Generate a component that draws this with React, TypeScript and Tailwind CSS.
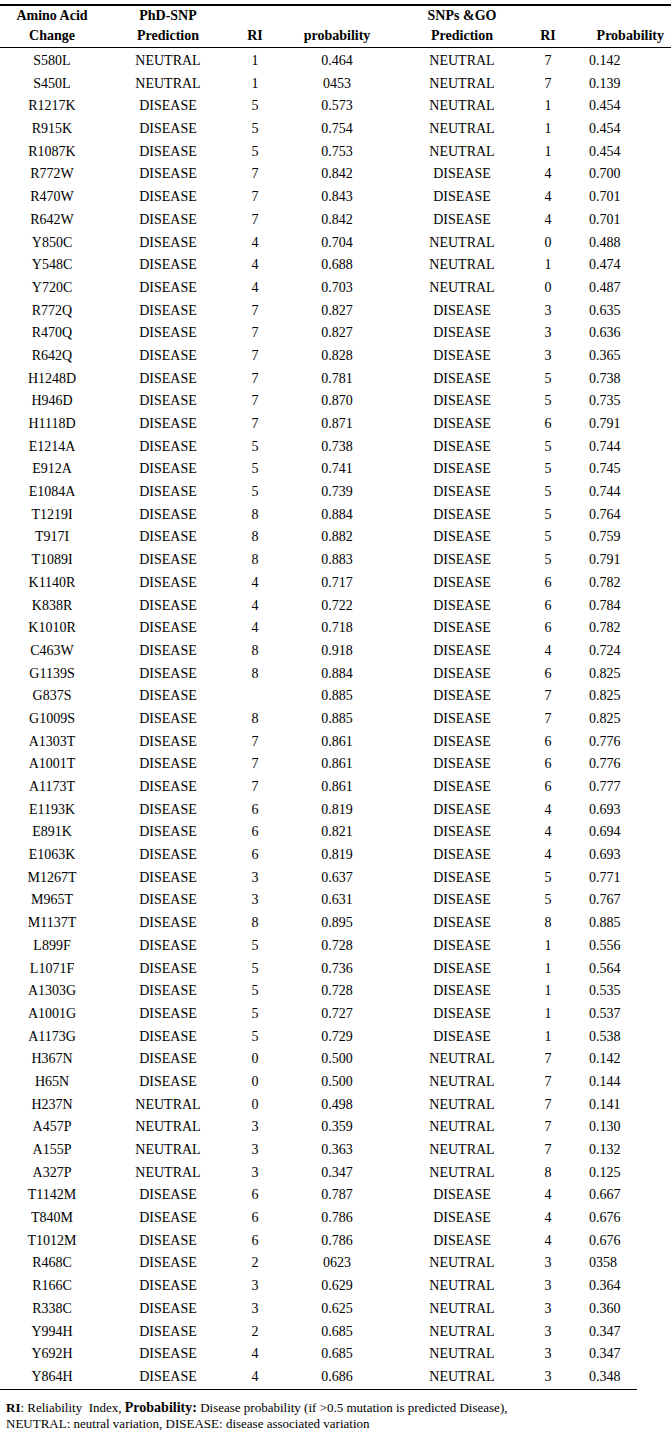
const rows: string[][] = [
  ['S580L', 'NEUTRAL', '1', '0.464', 'NEUTRAL', '7', '0.142'],
  ['S450L', 'NEUTRAL', '1', '0453', 'NEUTRAL', '7', '0.139'],
  ['R1217K', 'DISEASE', '5', '0.573', 'NEUTRAL', '1', '0.454'],
  ['R915K', 'DISEASE', '5', '0.754', 'NEUTRAL', '1', '0.454'],
  ['R1087K', 'DISEASE', '5', '0.753', 'NEUTRAL', '1', '0.454'],
  ['R772W', 'DISEASE', '7', '0.842', 'DISEASE', '4', '0.700'],
  ['R470W', 'DISEASE', '7', '0.843', 'DISEASE', '4', '0.701'],
  ['R642W', 'DISEASE', '7', '0.842', 'DISEASE', '4', '0.701'],
  ['Y850C', 'DISEASE', '4', '0.704', 'NEUTRAL', '0', '0.488'],
  ['Y548C', 'DISEASE', '4', '0.688', 'NEUTRAL', '1', '0.474'],
  ['Y720C', 'DISEASE', '4', '0.703', 'NEUTRAL', '0', '0.487'],
  ['R772Q', 'DISEASE', '7', '0.827', 'DISEASE', '3', '0.635'],
  ['R470Q', 'DISEASE', '7', '0.827', 'DISEASE', '3', '0.636'],
  ['R642Q', 'DISEASE', '7', '0.828', 'DISEASE', '3', '0.365'],
  ['H1248D', 'DISEASE', '7', '0.781', 'DISEASE', '5', '0.738'],
  ['H946D', 'DISEASE', '7', '0.870', 'DISEASE', '5', '0.735'],
  ['H1118D', 'DISEASE', '7', '0.871', 'DISEASE', '6', '0.791'],
  ['E1214A', 'DISEASE', '5', '0.738', 'DISEASE', '5', '0.744'],
  ['E912A', 'DISEASE', '5', '0.741', 'DISEASE', '5', '0.745'],
  ['E1084A', 'DISEASE', '5', '0.739', 'DISEASE', '5', '0.744'],
  ['T1219I', 'DISEASE', '8', '0.884', 'DISEASE', '5', '0.764'],
  ['T917I', 'DISEASE', '8', '0.882', 'DISEASE', '5', '0.759'],
  ['T1089I', 'DISEASE', '8', '0.883', 'DISEASE', '5', '0.791'],
  ['K1140R', 'DISEASE', '4', '0.717', 'DISEASE', '6', '0.782'],
  ['K838R', 'DISEASE', '4', '0.722', 'DISEASE', '6', '0.784'],
  ['K1010R', 'DISEASE', '4', '0.718', 'DISEASE', '6', '0.782'],
  ['C463W', 'DISEASE', '8', '0.918', 'DISEASE', '4', '0.724'],
  ['G1139S', 'DISEASE', '8', '0.884', 'DISEASE', '6', '0.825'],
  ['G837S', 'DISEASE', '', '0.885', 'DISEASE', '7', '0.825'],
  ['G1009S', 'DISEASE', '8', '0.885', 'DISEASE', '7', '0.825'],
  ['A1303T', 'DISEASE', '7', '0.861', 'DISEASE', '6', '0.776'],
  ['A1001T', 'DISEASE', '7', '0.861', 'DISEASE', '6', '0.776'],
  ['A1173T', 'DISEASE', '7', '0.861', 'DISEASE', '6', '0.777'],
  ['E1193K', 'DISEASE', '6', '0.819', 'DISEASE', '4', '0.693'],
  ['E891K', 'DISEASE', '6', '0.821', 'DISEASE', '4', '0.694'],
  ['E1063K', 'DISEASE', '6', '0.819', 'DISEASE', '4', '0.693'],
  ['M1267T', 'DISEASE', '3', '0.637', 'DISEASE', '5', '0.771'],
  ['M965T', 'DISEASE', '3', '0.631', 'DISEASE', '5', '0.767'],
  ['M1137T', 'DISEASE', '8', '0.895', 'DISEASE', '8', '0.885'],
  ['L899F', 'DISEASE', '5', '0.728', 'DISEASE', '1', '0.556'],
  ['L1071F', 'DISEASE', '5', '0.736', 'DISEASE', '1', '0.564'],
  ['A1303G', 'DISEASE', '5', '0.728', 'DISEASE', '1', '0.535'],
  ['A1001G', 'DISEASE', '5', '0.727', 'DISEASE', '1', '0.537'],
  ['A1173G', 'DISEASE', '5', '0.729', 'DISEASE', '1', '0.538'],
  ['H367N', 'DISEASE', '0', '0.500', 'NEUTRAL', '7', '0.142'],
  ['H65N', 'DISEASE', '0', '0.500', 'NEUTRAL', '7', '0.144'],
  ['H237N', 'NEUTRAL', '0', '0.498', 'NEUTRAL', '7', '0.141'],
  ['A457P', 'NEUTRAL', '3', '0.359', 'NEUTRAL', '7', '0.130'],
  ['A155P', 'NEUTRAL', '3', '0.363', 'NEUTRAL', '7', '0.132'],
  ['A327P', 'NEUTRAL', '3', '0.347', 'NEUTRAL', '8', '0.125'],
  ['T1142M', 'DISEASE', '6', '0.787', 'DISEASE', '4', '0.667'],
  ['T840M', 'DISEASE', '6', '0.786', 'DISEASE', '4', '0.676'],
  ['T1012M', 'DISEASE', '6', '0.786', 'DISEASE', '4', '0.676'],
  ['R468C', 'DISEASE', '2', '0623', 'NEUTRAL', '3', '0358'],
  ['R166C', 'DISEASE', '3', '0.629', 'NEUTRAL', '3', '0.364'],
  ['R338C', 'DISEASE', '3', '0.625', 'NEUTRAL', '3', '0.360'],
  ['Y994H', 'DISEASE', '2', '0.685', 'NEUTRAL', '3', '0.347'],
  ['Y692H', 'DISEASE', '4', '0.685', 'NEUTRAL', '3', '0.347'],
  ['Y864H', 'DISEASE', '4', '0.686', 'NEUTRAL', '3', '0.348'],
];

// column tracks: mutation | phd pred | RI | prob | snps&go pred | RI | prob
const cols = 'grid grid-cols-[104px_128px_46px_118px_132px_40px_103px]';

export default function App() {
  return (
    <div className="w-[671px] bg-white pt-[4px] text-black font-['Liberation_Serif','Times_New_Roman',serif]">
      <div className="border-t-2 border-black" />

      {/* header */}
      <div className={`${cols} h-[42px] items-end pb-[2px] text-[14px] font-bold leading-[20px] border-b border-black`}>
        <div className="text-center">Amino Acid<br />Change</div>
        <div className="text-center">PhD-SNP<br />Prediction</div>
        <div className="text-center">RI</div>
        <div className="text-center">probability</div>
        <div className="text-center">SNPs &amp;GO<br />Prediction</div>
        <div className="text-center">RI</div>
        <div className="text-right pr-[7px]">Probability</div>
      </div>

      {/* body */}
      <div className="pb-[2px] text-[14px]">
        {rows.map((r) => (
          <div key={r[0]} className={`${cols} h-[22.69px] pt-[3px] leading-[19.69px]`}>
            <div className="text-center">{r[0]}</div>
            <div className="text-center">{r[1]}</div>
            <div className="text-center">{r[2]}</div>
            <div className="text-center">{r[3]}</div>
            <div className="text-center">{r[4]}</div>
            <div className="text-center">{r[5]}</div>
            <div className="pl-[21px]">{r[6]}</div>
          </div>
        ))}
      </div>
      <div className="w-[637px] border-t border-black" />

      {/* note */}
      <div className="pl-[6px] pt-[10px] text-[13px] leading-[16px]">
        <p>
          <b>RI</b>: Reliability&nbsp; Index, <b className="text-[14px]">Probability:</b> Disease probability (if &gt;0.5 mutation is predicted Disease),
        </p>
        <p>NEUTRAL: neutral variation, DISEASE: disease associated variation</p>
      </div>
    </div>
  );
}
